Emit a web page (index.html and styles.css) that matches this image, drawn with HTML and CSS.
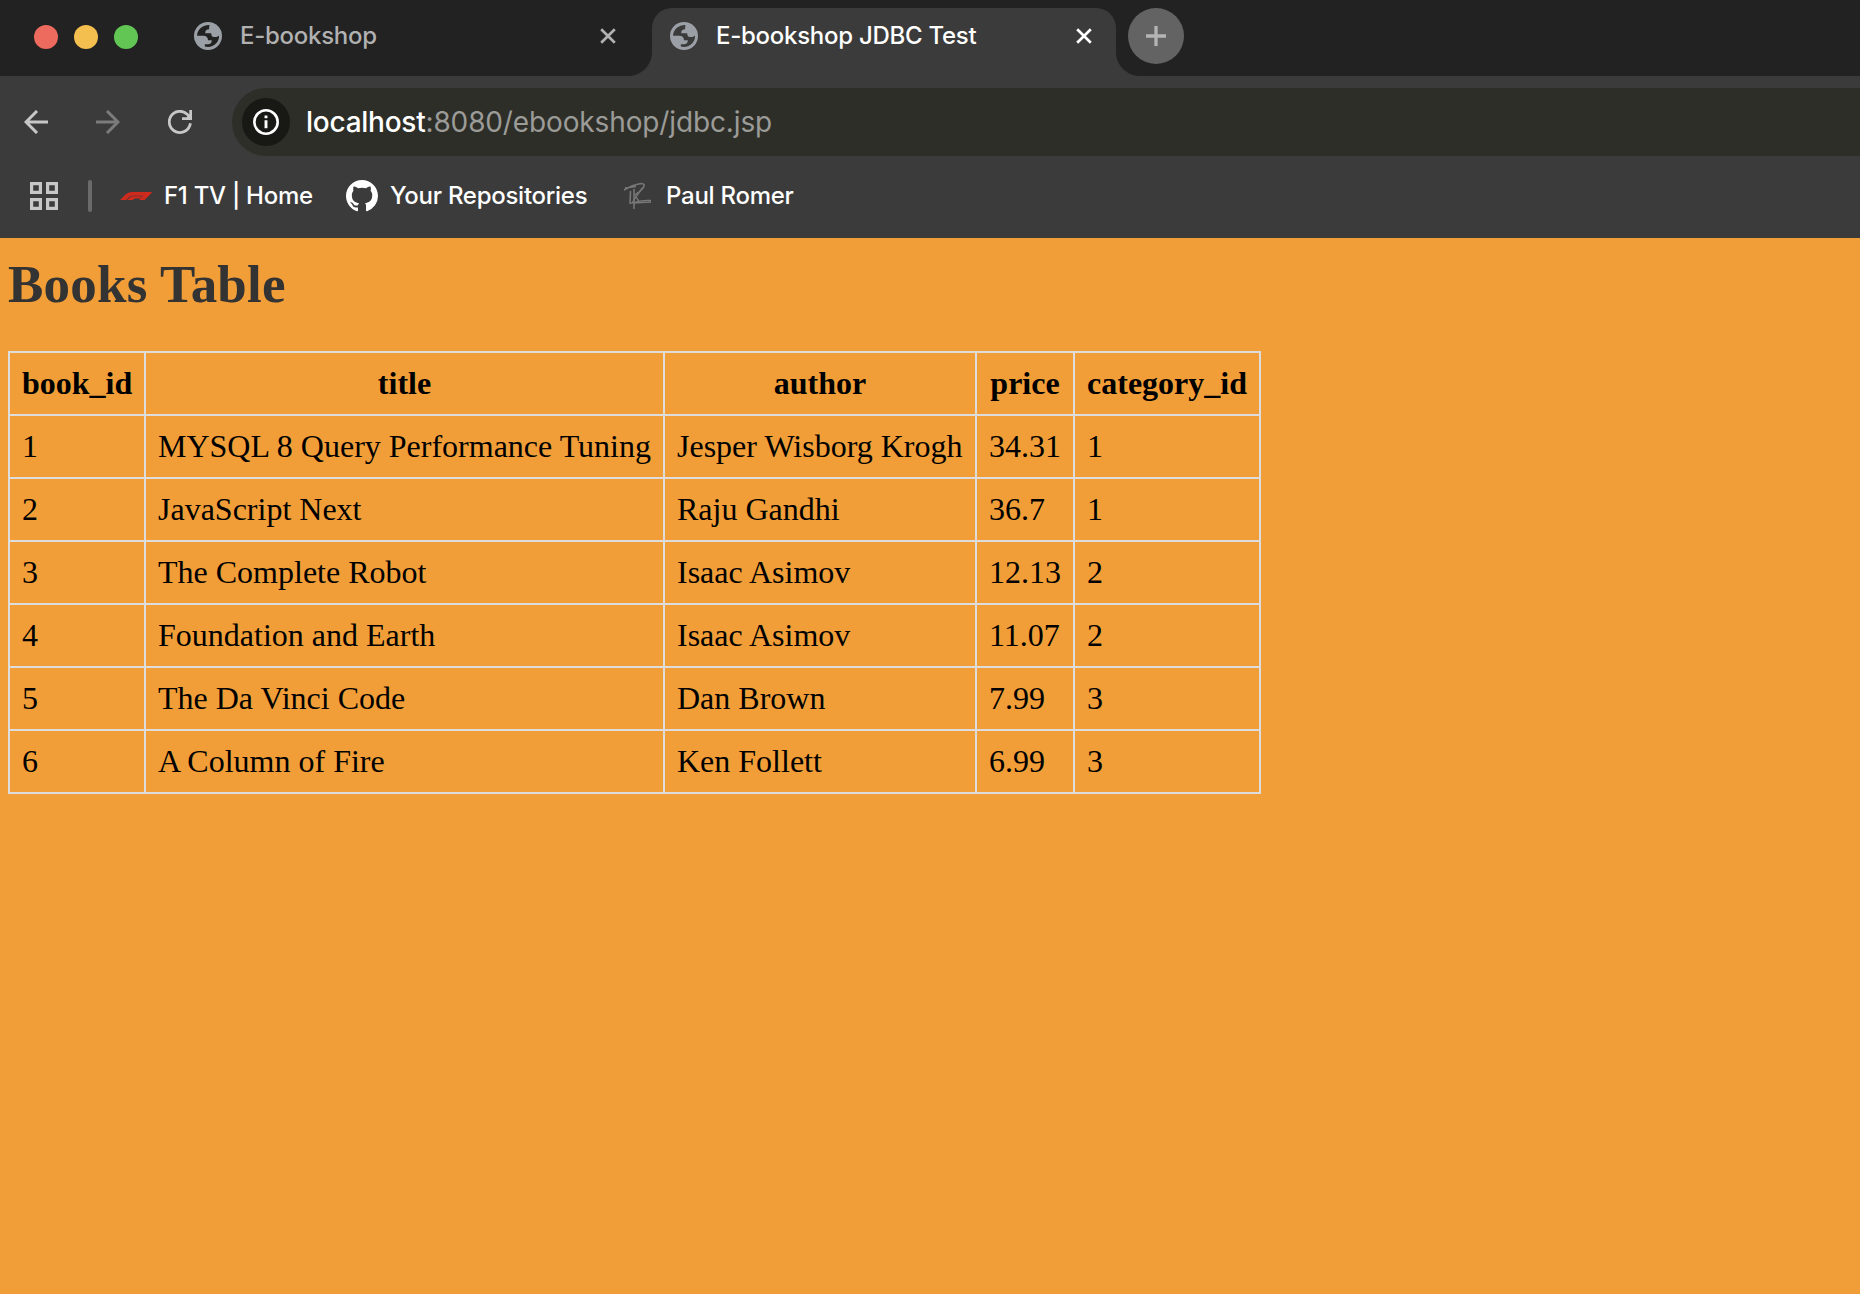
FILE: index.html
```html
<!DOCTYPE html>
<html lang="en">
<head>
<meta charset="utf-8">
<title>E-bookshop JDBC Test</title>
<link rel="stylesheet" href="styles.css">
</head>
<body>
<svg class="sprites" width="0" height="0">
  <symbol id="globe" viewBox="0 0 28 28">
    <circle cx="14" cy="14" r="14" fill="#9aa0a6"/>
    <path fill="var(--hole)" d="M15.500 3.100C13 2.800 9.500 3.600 6.600 6.100C4.700 7.900 3.200 10.500 3 13.800H9.500C12.200 13.900 14 15.500 14 18.200H17.800C17.800 21 16.500 22.300 13.800 22.200H10.800V24.500C15 25.600 19.500 24.300 22.300 21.200C24.300 19 25.200 16.500 25 13.500C23.500 14.800 22 15.200 20 15C18 14.700 17.200 13.500 17.200 11.200H11.300C11 8.700 12.500 7.300 15.200 7.200C15 5.800 15.200 4.200 15.500 3.100Z"/>
  </symbol>
  <symbol id="cross" viewBox="0 0 16 16">
    <path d="M1.200 1.200L14.800 14.800M14.800 1.200L1.200 14.800" stroke="currentColor" stroke-width="2.700"/>
  </symbol>
</svg>

<header class="browser">
  <div class="tab-strip">
    <div class="lights"><i class="light red"></i><i class="light yellow"></i><i class="light green"></i></div>
    <div class="tab">
      <svg class="globe"><use href="#globe"/></svg>
      <span class="tab-title">E-bookshop</span>
      <svg class="close"><use href="#cross"/></svg>
    </div>
    <div class="tab active">
      <svg class="globe"><use href="#globe"/></svg>
      <span class="tab-title">E-bookshop JDBC Test</span>
      <svg class="close"><use href="#cross"/></svg>
    </div>
    <div class="new-tab"><svg width="20" height="20" viewBox="0 0 20 20"><path d="M10 0V20M0 10H20" stroke="#b4b4b4" stroke-width="3.300"/></svg></div>
  </div>

  <div class="toolbar">
    <svg class="nav" viewBox="0 0 24 24"><path d="M24 12H2M13 1L2 12L13 23" fill="none" stroke="#c7c7c7" stroke-width="3"/></svg>
    <svg class="nav" viewBox="0 0 24 24"><path d="M0 12H22M11 1L22 12L11 23" fill="none" stroke="#7b7b7b" stroke-width="3"/></svg>
    <svg class="nav" viewBox="0 0 24 24"><path d="M22.400 13.300A10.600 10.600 0 1 1 19.500 4.500L21 6.500" fill="none" stroke="#c7c7c7" stroke-width="2.800"/><path d="M24 0V10H14V7.300H18.500L21.300 4.500V0Z" fill="#c7c7c7"/></svg>
    <div class="address">
      <div class="info"><svg width="26" height="26" viewBox="0 0 26 26"><circle cx="13" cy="13" r="11.700" fill="none" stroke="#fff" stroke-width="2.600"/><path d="M13 11.300V19.300M13 6.500V9.300" stroke="#fff" stroke-width="2.900"/></svg></div>
      <span class="url"><b>localhost</b>:8080/ebookshop/jdbc.jsp</span>
    </div>
  </div>

  <nav class="bookmarks">
    <svg class="apps" viewBox="0 0 28 28"><path d="M1.600 1.600H10.400V10.400H1.600ZM17.600 1.600H26.400V10.400H17.600ZM1.600 17.600H10.400V26.400H1.600ZM17.600 17.600H26.400V26.400H17.600Z" fill="none" stroke="#c7c7c7" stroke-width="3.200"/></svg>
    <i class="divider"></i>
    <div class="bookmark f1">
      <svg width="32" height="8" viewBox="0 0 32 8"><path fill="#cf2a1e" d="M0 8L5.500 2.500Q8 0 12 0H32L28.500 3.700H13Q10.500 3.700 9 5L6 8Z"/><path fill="#cf2a1e" d="M7 8L10 5.300Q11.200 4.200 13 4.200H22.500L20 6.600H14.500L13 8ZM19 8L26.500 .5H32L24.500 8Z"/></svg>
      <span>F1 TV | Home</span>
    </div>
    <div class="bookmark gh">
      <svg width="32" height="32" viewBox="0 0 16 16"><path fill="#fff" d="M8 0C3.580 0 0 3.580 0 8c0 3.540 2.290 6.530 5.470 7.590.4.070.55-.17.55-.38 0-.19-.01-.82-.01-1.490-2.010.37-2.530-.49-2.690-.94-.09-.23-.48-.94-.82-1.130-.28-.15-.68-.52-.01-.53.63-.01 1.080.58 1.230.82.72 1.210 1.870.87 2.330.66.070-.52.28-.87.51-1.070-1.780-.2-3.640-.89-3.640-3.950 0-.87.31-1.590.82-2.150-.08-.2-.36-1.020.08-2.120 0 0 .67-.21 2.200.82.64-.18 1.320-.27 2-.27s1.360.09 2 .27c1.530-1.040 2.200-.82 2.200-.82.44 1.100.16 1.920.08 2.120.51.56.82 1.270.82 2.150 0 3.070-1.870 3.750-3.650 3.950.29.25.54.73.54 1.480 0 1.070-.01 1.930-.01 2.200 0 .21.150.46.55.38A8.010 8.010 0 0 0 16 8c0-4.420-3.580-8-8-8Z"/></svg>
      <span>Your Repositories</span>
    </div>
    <div class="bookmark pr">
      <svg width="28" height="28" viewBox="0 0 28 28" fill="none" stroke="#777" stroke-width="1.600"><path d="M0 8Q8 3 17 1.500Q22 1.500 19 6Q16 10 11 13M1 6L12 4.500M6.500 9L6 22M10 7L10 27"/><path d="M19 5L8 21Q17 17.500 27 18.500M9 21L27 20M11 14Q14 17 15 20" stroke-width="1.300"/></svg>
      <span>Paul Romer</span>
    </div>
  </nav>
</header>

<main class="page">
  <h2>Books Table</h2>
  <table>
    <colgroup><col class="c1"><col class="c2"><col class="c3"><col class="c4"><col class="c5"></colgroup>
    <tr><th>book_id</th><th>title</th><th>author</th><th>price</th><th>category_id</th></tr>
    <tr><td>1</td><td>MYSQL 8 Query Performance Tuning</td><td>Jesper Wisborg Krogh</td><td>34.31</td><td>1</td></tr>
    <tr><td>2</td><td>JavaScript Next</td><td>Raju Gandhi</td><td>36.7</td><td>1</td></tr>
    <tr><td>3</td><td>The Complete Robot</td><td>Isaac Asimov</td><td>12.13</td><td>2</td></tr>
    <tr><td>4</td><td>Foundation and Earth</td><td>Isaac Asimov</td><td>11.07</td><td>2</td></tr>
    <tr><td>5</td><td>The Da Vinci Code</td><td>Dan Brown</td><td>7.99</td><td>3</td></tr>
    <tr><td>6</td><td>A Column of Fire</td><td>Ken Follett</td><td>6.99</td><td>3</td></tr>
  </table>
</main>
</body>
</html>
```
FILE: styles.css
```css
* { box-sizing: border-box; }
html, body { margin: 0; height: 100%; overflow: hidden; }
body { background: #f19e38; display: flex; flex-direction: column; }
svg { display: block; flex: none; }
.sprites { position: absolute; }

.browser { height: 238px; flex: none; background: #3b3b3b; font-family: Inter, sans-serif; font-weight: 450; color: #fff; white-space: nowrap; }

.tab-strip { height: 76px; display: flex; align-items: flex-start; background: #222; }
.lights { display: flex; gap: 16px; padding: 25px 0 0 34px; width: 176px; }
.light { width: 24px; height: 24px; border-radius: 50%; }
.red { background: #ed6a5e; }
.yellow { background: #f5bf4f; }
.green { background: #62c655; }

.tab { --hole: #222; width: 476px; height: 56px; margin-top: 8px; padding: 0 36px 0 18px; display: flex; align-items: center; color: #b1b1b1; font-size: 24px; letter-spacing: -0.27px; }
.tab.active { --hole: #3b3b3b; position: relative; height: 68px; width: 464px; padding: 0 24px 12px 18px; border-radius: 20px 20px 0 0; background: #3b3b3b; color: #fff; }
.tab.active::before, .tab.active::after { content: ""; position: absolute; bottom: 0; width: 24px; height: 24px; }
.tab.active::before { left: -24px; background: radial-gradient(circle at 0 0, transparent 23.500px, #3b3b3b 24.500px); }
.tab.active::after { right: -24px; background: radial-gradient(circle at 100% 0, transparent 23.500px, #3b3b3b 24.500px); }
.tab-title { flex: 1; margin-left: 18px; padding-bottom: 1px; }
.globe { width: 28px; height: 28px; }
.close { width: 16px; height: 16px; }
.new-tab { width: 56px; height: 56px; margin: 8px 0 0 12px; border-radius: 50%; background: #636363; display: grid; place-items: center; }

.toolbar { height: 68px; margin-top: 12px; display: flex; align-items: center; padding-left: 24px; gap: 48px; }
.nav { width: 24px; height: 24px; }
.address { flex: 1; height: 68px; margin-left: -8px; padding-left: 10px; border-radius: 34px 0 0 34px; background: #2e2e29; display: flex; align-items: center; }
.info { width: 48px; height: 48px; border-radius: 50%; background: #181814; display: grid; place-items: center; }
.url { margin-left: 16px; font-size: 28px; font-weight: 400; letter-spacing: -0.13px; color: #9b9b98; }
.url b { font-weight: 500; letter-spacing: -0.25px; color: #fff; }

.bookmarks { height: 80px; display: flex; align-items: center; padding-left: 30px; font-size: 24px; letter-spacing: -0.27px; }
.apps { width: 28px; height: 28px; }
.divider { width: 4px; height: 32px; margin-left: 30px; border-radius: 2px; background: #6a6a6a; }
.bookmark { display: flex; align-items: center; }
.bookmark span { padding-bottom: 2px; }
.f1 { margin-left: 28px; gap: 12px; width: 226px; }
.gh { gap: 12px; width: 278px; }
.pr { gap: 14px; }

.page { padding: 13px 8px; font-family: "Liberation Serif", serif; font-size: 32px; }
h2 { margin: 0; height: 100px; color: #333; font-size: 53px; line-height: 67px; letter-spacing: 0.2px; }
table { width: 1253px; table-layout: fixed; border-collapse: collapse; white-space: nowrap; }
tr { height: 63px; }
th, td { border: 2px solid #ddd; padding: 0 12px 2px; line-height: 36px; }
td { text-align: left; }
.c1 { width: 136px; }
.c2 { width: 519px; }
.c3 { width: 312px; }
.c4 { width: 98px; }
.c5 { width: 186px; }
```
